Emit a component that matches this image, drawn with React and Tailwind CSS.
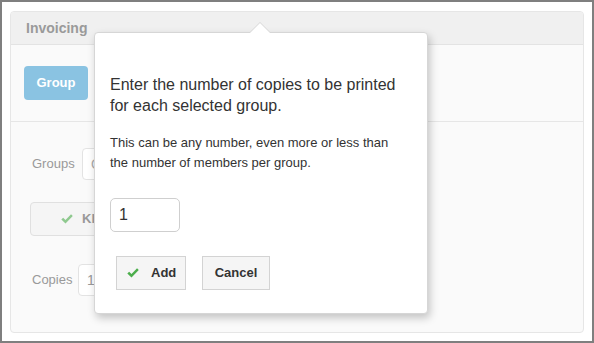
import React from "react";

function Check({ className }) {
  return (
    <svg viewBox="0 0 16 16" className={className} fill="currentColor">
      <path d="M1.5 8.6 L3.6 6.6 L6.3 9.2 L12.6 2.6 L14.6 4.6 L6.3 13.2 Z" />
    </svg>
  );
}

export default function App() {
  return (
    <div
      className="relative w-[594px] h-[343px] border-2 border-[#7f7f7f] bg-white pt-[9px] px-[8px] pb-[8px] overflow-hidden"
      style={{ fontFamily: '"Liberation Sans", Arial, sans-serif' }}
    >
      <div className="h-full rounded-[4px] border border-[#e6e6e6] bg-[#fafafa] flex flex-col overflow-hidden">
        <div className="h-[33px] shrink-0 bg-[#f0f0f0] border-b border-[#e3e3e3] flex items-center pl-[15px]">
          <span className="text-[14px] font-bold text-[#9a9a9a]">Invoicing</span>
        </div>
        <div className="pt-[21px] pl-[13px] pb-[21px] border-b border-[#e6e6e6]">
          <div className="w-[64px] h-[34px] rounded-[4px] bg-[#8ac3e2] flex items-center justify-center text-white font-bold text-[13px]">
            Group
          </div>
        </div>
        <div className="pl-[21px] flex flex-col">
          <div className="mt-[26px] flex items-center">
            <span className="text-[13px] text-[#999] w-[50px]">Groups</span>
            <div className="h-[32px] w-[120px] border border-[#e3e3e3] rounded-[4px] bg-white flex items-center pl-[8px] text-[14px] text-[#aaa]">
              O
            </div>
          </div>
          <div className="mt-[22px] ml-[-2px] h-[34px] w-[180px] border border-[#e0e0e0] rounded-[4px] bg-[#f5f5f5] flex items-center pl-[29px] gap-[8px]">
            <Check className="w-[14px] h-[14px] text-[#8fc98f]" />
            <span className="text-[13px] font-bold text-[#999]">Kl</span>
          </div>
          <div className="mt-[28px] flex items-center">
            <span className="text-[13px] text-[#999] w-[46px]">Copies</span>
            <div className="h-[32px] w-[120px] border border-[#e3e3e3] rounded-[4px] bg-white flex items-center pl-[8px] text-[14px] text-[#999]">
              1
            </div>
          </div>
        </div>
      </div>

      {/* Popover */}
      <div className="absolute left-[92px] top-[30px] w-[334px] h-[282px] bg-white rounded-[4px] border border-[#d6d6d6] shadow-[2px_4px_8px_rgba(0,0,0,0.22)]">
        <div className="absolute left-[154px] top-[-11px] w-0 h-0 border-l-[11px] border-r-[11px] border-b-[11px] border-l-transparent border-r-transparent border-b-[#d6d6d6]" />
        <div className="absolute left-[155px] top-[-10px] w-0 h-0 border-l-[10px] border-r-[10px] border-b-[10px] border-l-transparent border-r-transparent border-b-white" />
        <div className="pt-[41px] pl-[15px] pr-[10px]">
          <p className="text-[16px] leading-[21px] text-[#333]">
            Enter the number of copies to be printed
            <br />
            for each selected group.
          </p>
          <p className="mt-[17px] text-[13px] leading-[20px] text-[#333]">
            This can be any number, even more or less than
            <br />
            the number of members per group.
          </p>
          <div className="mt-[25px] w-[70px] h-[34px] border border-[#cfcfcf] rounded-[5px] flex items-center pl-[8px] text-[16px] text-[#333]">
            1
          </div>
          <div className="mt-[24px] ml-[6px] flex gap-[16px]">
            <div className="w-[70px] h-[34px] border border-[#d3d3d3] bg-[#f5f5f5] flex items-center pl-[9px] gap-[11px]">
              <Check className="w-[14px] h-[14px] text-[#4cae4c]" />
              <span className="text-[13px] font-bold text-[#333]">Add</span>
            </div>
            <div className="w-[68px] h-[34px] border border-[#d3d3d3] bg-[#f5f5f5] flex items-center justify-center">
              <span className="text-[13px] font-bold text-[#333]">Cancel</span>
            </div>
          </div>
        </div>
      </div>
    </div>
  );
}
